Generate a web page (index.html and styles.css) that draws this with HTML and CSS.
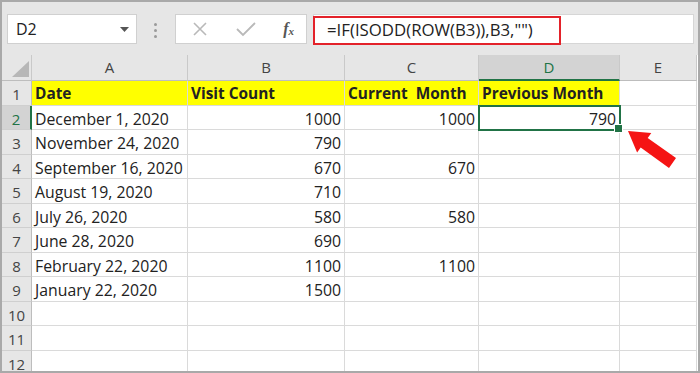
FILE: index.html
```html
<!DOCTYPE html>
<html lang="en">
<head>
	<meta charset="UTF-8">
	<title>Excel - ISODD ROW</title>
	<link rel="stylesheet" href="styles.css">
</head>
<body>
	<div class="window">
		<div class="toolbar">
			<div class="namebox">
				<span>D2</span>
				<svg class="caret" width="9" height="5" viewBox="0 0 9 5"><polygon points="0,0 9,0 4.5,5" fill="#555"/></svg>
			</div>
			<div class="grip"><i></i><i></i><i></i></div>
			<div class="fbuttons">
				<svg width="16" height="16" viewBox="0 0 16 16"><path d="M2 2 L14 14 M14 2 L2 14" stroke="#b9b9b9" stroke-width="1.6" fill="none"/></svg>
				<svg width="20" height="16" viewBox="0 0 20 16"><path d="M1 8 L7 14 L19 2" stroke="#b9b9b9" stroke-width="1.8" fill="none"/></svg>
				<span class="fx">f<sub>x</sub></span>
			</div>
			<div class="formula">
				<span class="formula-text">=IF(ISODD(ROW(B3)),B3,"")</span>
			</div>
		</div>

		<div class="sheet">
			<div class="hd corner"></div>
			<div class="hd">A</div>
			<div class="hd">B</div>
			<div class="hd">C</div>
			<div class="hd sel">D</div>
			<div class="hd">E</div>

			<div class="rh">1</div>
			<div class="c y b">Date</div>
			<div class="c y b">Visit Count</div>
			<div class="c y b">Current  Month</div>
			<div class="c y b">Previous Month</div>
			<div class="c"></div>

			<div class="rh sel">2</div>
			<div class="c">December 1, 2020</div>
			<div class="c n">1000</div>
			<div class="c n">1000</div>
			<div class="c n active">790</div>
			<div class="c"></div>

			<div class="rh">3</div>
			<div class="c">November 24, 2020</div>
			<div class="c n">790</div>
			<div class="c n"></div>
			<div class="c n"></div>
			<div class="c"></div>

			<div class="rh">4</div>
			<div class="c">September 16, 2020</div>
			<div class="c n">670</div>
			<div class="c n">670</div>
			<div class="c n"></div>
			<div class="c"></div>

			<div class="rh">5</div>
			<div class="c">August 19, 2020</div>
			<div class="c n">710</div>
			<div class="c n"></div>
			<div class="c n"></div>
			<div class="c"></div>

			<div class="rh">6</div>
			<div class="c">July 26, 2020</div>
			<div class="c n">580</div>
			<div class="c n">580</div>
			<div class="c n"></div>
			<div class="c"></div>

			<div class="rh">7</div>
			<div class="c">June 28, 2020</div>
			<div class="c n">690</div>
			<div class="c n"></div>
			<div class="c n"></div>
			<div class="c"></div>

			<div class="rh">8</div>
			<div class="c">February 22, 2020</div>
			<div class="c n">1100</div>
			<div class="c n">1100</div>
			<div class="c n"></div>
			<div class="c"></div>

			<div class="rh">9</div>
			<div class="c">January 22, 2020</div>
			<div class="c n">1500</div>
			<div class="c n"></div>
			<div class="c n"></div>
			<div class="c"></div>

			<div class="rh">10</div>
			<div class="c"></div><div class="c"></div><div class="c"></div><div class="c"></div><div class="c"></div>

			<div class="rh">11</div>
			<div class="c"></div><div class="c"></div><div class="c"></div><div class="c"></div><div class="c"></div>

			<div class="rh">12</div>
			<div class="c"></div><div class="c"></div><div class="c"></div><div class="c"></div><div class="c"></div>
		</div>

		<!-- annotation arrow pointing at the fill handle -->
		<svg class="arrow" width="60" height="50" viewBox="620 125 60 50">
			<polygon points="628,131 651.3,133.1 647.7,138 676,158.1 669,167.9 640.7,147.6 637.1,152.5" fill="#f51414"/>
		</svg>
	</div>
</body>
</html>
```

FILE: styles.css
```css
*{
	margin: 0;
	padding: 0;
	box-sizing: border-box;
}
body{
	font-family: "Open Sans", "Noto Sans", sans-serif;
	background: #fff;
}
.window{
	width: 700px;
	height: 373px;
	border: 2px solid #a9a9a9;
	background: #e6e6e6;
	display: flex;
	flex-direction: column;
	position: relative;
	overflow: hidden;
}
.toolbar{
	height: 53px;
	flex: none;
	display: flex;
	align-items: flex-start;
	padding: 12px 3px 0 5px;
}
.namebox{
	width: 130px;
	height: 30px;
	background: #fff;
	border: 1px solid #d0d0d0;
	display: flex;
	align-items: center;
	justify-content: space-between;
	padding: 0 7px 0 8px;
	font-size: 16px;
	color: #222;
}
.grip{
	width: 3px;
	margin: 9px 0 0 17px;
	display: flex;
	flex-direction: column;
	gap: 3px;
}
.grip i{
	display: block;
	width: 3px;
	height: 3px;
	border-radius: 50%;
	background: #9a9a9a;
}
.fbuttons{
	width: 132px;
	height: 30px;
	margin-left: 18px;
	background: #fff;
	border: 1px solid #d0d0d0;
	display: flex;
	align-items: center;
	padding: 0 12px 0 16px;
	justify-content: space-between;
}
.fx{
	font-family: "Liberation Serif", serif;
	font-style: italic;
	font-weight: bold;
	font-size: 16px;
	color: #555;
}
.fx sub{
	font-size: 11px;
	vertical-align: -1px;
}
.formula{
	flex: 1;
	height: 30px;
	margin-left: 6px;
	margin-right: 1px;
	background: #fff;
	border: 1px solid #d6d6d6;
}
.formula-text{
	display: block;
	width: 248px;
	height: 29px;
	margin: 1px 0 0 -1px;
	border: 2px solid #e3222a;
	padding-left: 12px;
	font-size: 16.8px;
	line-height: 24px;
	color: #222;
	white-space: pre;
}
.sheet{
	flex: 1;
	overflow: hidden;
	display: grid;
	grid-template-columns: 30px 156px 157px 134px 141px 77px;
	grid-template-rows: 26px;
	grid-auto-rows: 24.5px;
	background: #fff;
	align-content: start;
}
.hd{
	background: #e6e6e6;
	border-right: 1px solid #c9c9c9;
	border-bottom: 1px solid #bdbdbd;
	text-align: center;
	font-size: 15px;
	line-height: 25px;
	color: #444;
}
.hd.sel{
	background: #d3d3d3;
	color: #217346;
	border-bottom: 2px solid #217346;
}
.corner{
	position: relative;
}
.corner::after{
	content: "";
	position: absolute;
	right: 2px;
	bottom: 3px;
	border-style: solid;
	border-width: 0 0 16px 17px;
	border-color: transparent transparent #b7b7b7 transparent;
}
.rh{
	background: #e6e6e6;
	border-right: 1px solid #bdbdbd;
	border-bottom: 1px solid #cfcfcf;
	text-align: center;
	font-size: 15px;
	padding-top: 2px;
	line-height: 22px;
	color: #444;
}
.rh.sel{
	background: #d3d3d3;
	color: #217346;
	border-right: 2px solid #217346;
}
.c{
	border-right: 1px solid #dadada;
	border-bottom: 1px solid #dadada;
	font-size: 15.8px;
	padding: 3px 3px 0;
	line-height: 20px;
	color: #222;
	white-space: pre;
	overflow: hidden;
}
.c.y{
	background: #ffff00;
}
.c.b{
	font-weight: bold;
	font-size: 15.4px;
}
.c.n{
	text-align: right;
}
.c.active{
	position: relative;
	overflow: visible;
	outline: 2px solid #217346;
	outline-offset: -1px;
}
.c.active::after{
	content: "";
	position: absolute;
	right: -4px;
	bottom: -4px;
	width: 7px;
	height: 7px;
	background: #217346;
	border: 1px solid #fff;
	z-index: 2;
}
.arrow{
	position: absolute;
	left: 618px;
	top: 123px;
}
```
